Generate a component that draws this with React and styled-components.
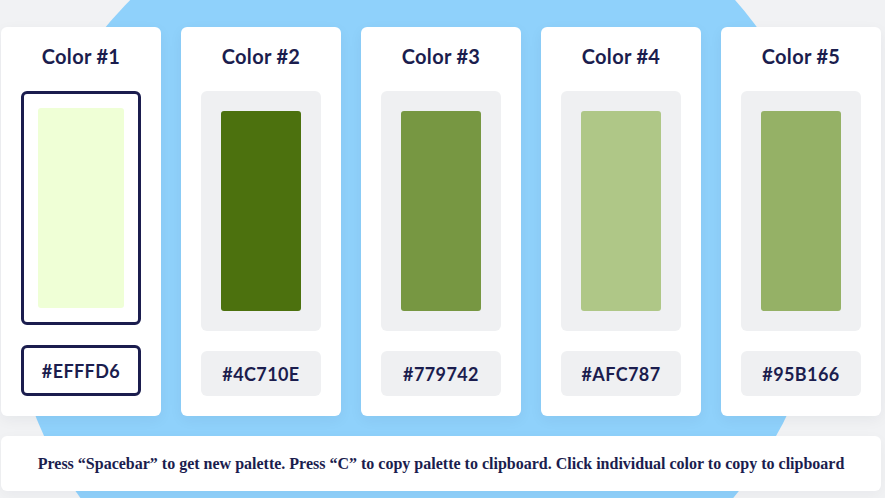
import React from "react";
import styled, { createGlobalStyle } from "styled-components";

const GlobalStyle = createGlobalStyle`
  html, body { margin: 0; padding: 0; background: #f1f2f4; }
  body { width: 885px; height: 498px; overflow: hidden; }
  * { box-sizing: border-box; }
`;

const navy = "#1b1d4e";

const Page = styled.div`
  position: relative;
  width: 885px;
  height: 498px;
  overflow: hidden;
  background: #f1f2f4;
  padding: 27px 4px 0 1px;
`;

const Blob = styled.div`
  position: absolute;
  left: 6px;
  top: -124px;
  width: 826px;
  height: 774px;
  border-radius: 50%;
  background: #8fd1fb;
  transform: rotate(-25deg);
  z-index: 0;
`;

const Content = styled.div`
  position: relative;
  z-index: 1;
  display: flex;
  flex-direction: column;
  gap: 20px;
  width: 880px;
`;

const Row = styled.div`
  display: flex;
  gap: 20px;
`;

const Card = styled.div`
  width: 160px;
  background: #ffffff;
  border-radius: 6px;
  padding: 17px 20px 20px;
  display: flex;
  flex-direction: column;
  align-items: center;
  box-shadow: 0 4px 14px rgba(20, 30, 60, 0.05);
  font-family: Lato, "Open Sans", sans-serif;
  color: ${navy};
`;

const Title = styled.div`
  font-size: 20px;
  font-weight: 700;
  line-height: 24px;
  letter-spacing: 0.3px;
  margin-bottom: 23px;
`;

const Frame = styled.div`
  width: 120px;
  border-radius: 6px;
  background: ${(p) => (p.$selected ? "#ffffff" : "#eff0f2")};
  border: ${(p) => (p.$selected ? `3px solid ${navy}` : "none")};
  padding: ${(p) => (p.$selected ? "14px" : "20px")};
`;

const Swatch = styled.div`
  width: 100%;
  height: 200px;
  border-radius: 3px;
`;

const Hex = styled.div`
  margin-top: 20px;
  width: 120px;
  height: ${(p) => (p.$selected ? "51px" : "45px")};
  border-radius: 6px;
  background: ${(p) => (p.$selected ? "#ffffff" : "#eff0f2")};
  border: ${(p) => (p.$selected ? `3px solid ${navy}` : "none")};
  display: flex;
  align-items: center;
  justify-content: center;
  font-size: 18px;
  font-weight: 700;
  letter-spacing: 0.4px;
  padding-top: 1px;
`;

const Bar = styled.div`
  height: 55px;
  background: #ffffff;
  border-radius: 6px;
  display: flex;
  align-items: center;
  justify-content: center;
  font-family: "Liberation Serif", "Times New Roman", serif;
  font-weight: 700;
  font-size: 16px;
  color: ${navy};
  box-shadow: 0 4px 14px rgba(20, 30, 60, 0.04);
`;

const colors = ["#EFFFD6", "#4C710E", "#779742", "#AFC787", "#95B166"];

export default function App() {
  return (
    <>
      <GlobalStyle />
      <Page>
        <Blob />
        <Content>
          <Row>
            {colors.map((c, i) => {
              const sel = i === 0;
              return (
                <Card key={c}>
                  <Title>Color #{i + 1}</Title>
                  <Frame $selected={sel}>
                    <Swatch style={{ background: c }} />
                  </Frame>
                  <Hex $selected={sel}>{c}</Hex>
                </Card>
              );
            })}
          </Row>
          <Bar>
            Press “Spacebar” to get new palette. Press “C” to copy palette to clipboard. Click individual color to copy to clipboard
          </Bar>
        </Content>
      </Page>
    </>
  );
}
